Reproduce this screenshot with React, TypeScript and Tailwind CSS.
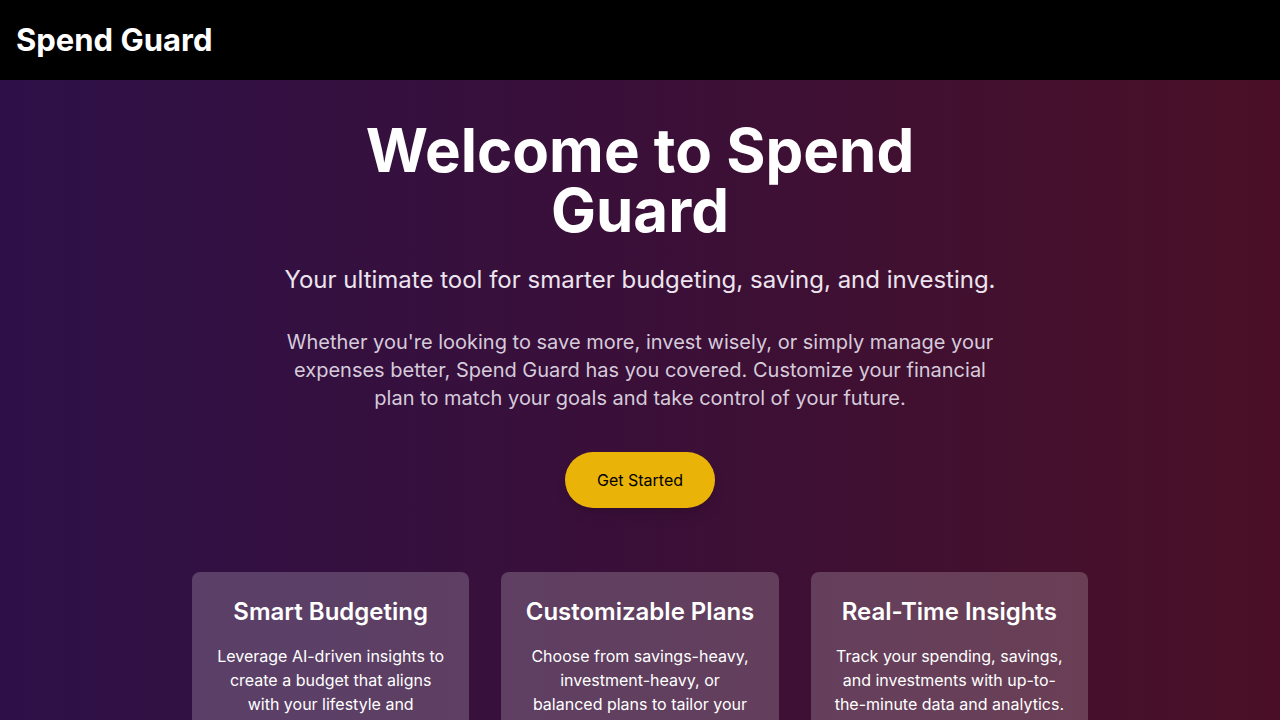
const features = [
  {
    title: "Smart Budgeting",
    body: "Leverage AI-driven insights to create a budget that aligns with your lifestyle and financial goals.",
  },
  {
    title: "Customizable Plans",
    body: "Choose from savings-heavy, investment-heavy, or balanced plans to tailor your finances to your needs.",
  },
  {
    title: "Real-Time Insights",
    body: "Track your spending, savings, and investments with up-to-the-minute data and analytics.",
  },
];

export default function App() {
  return (
    <div className="min-h-screen flex flex-col font-['Inter','Noto_Sans',sans-serif] text-white">
      {/* Header */}
      <header className="bg-black h-20 px-4 flex items-center">
        <span className="text-[31px] font-bold">Spend Guard</span>
      </header>

      {/* Hero */}
      <main className="flex-1 bg-gradient-to-r from-[#2e1048] via-[#3a0f38] to-[#4a0f26] px-4 pt-10 pb-16">
        <div className="max-w-3xl mx-auto flex flex-col items-center text-center">
          <h1 className="max-w-2xl text-6xl font-bold leading-none mb-6">
            Welcome to Spend Guard
          </h1>
          <p className="text-2xl text-[#ece4ee] mb-8">
            Your ultimate tool for smarter budgeting, saving, and investing.
          </p>
          <p className="max-w-[720px] text-xl text-[#d6cbdb]">
            Whether you're looking to save more, invest wisely, or simply manage your
            expenses better, Spend Guard has you covered. Customize your financial
            plan to match your goals and take control of your future.
          </p>
          <button className="mt-10 bg-[#eab308] text-black px-8 py-4 rounded-full shadow-lg">
            Get Started
          </button>
        </div>

        {/* Features */}
        <div className="max-w-4xl mx-auto mt-16 grid grid-cols-3 gap-8">
          {features.map((f) => (
            <div key={f.title} className="bg-white/20 rounded-lg p-6 text-center">
              <h2 className="text-2xl font-semibold mb-4">{f.title}</h2>
              <p className="text-base text-white">{f.body}</p>
            </div>
          ))}
        </div>
      </main>
    </div>
  );
}
